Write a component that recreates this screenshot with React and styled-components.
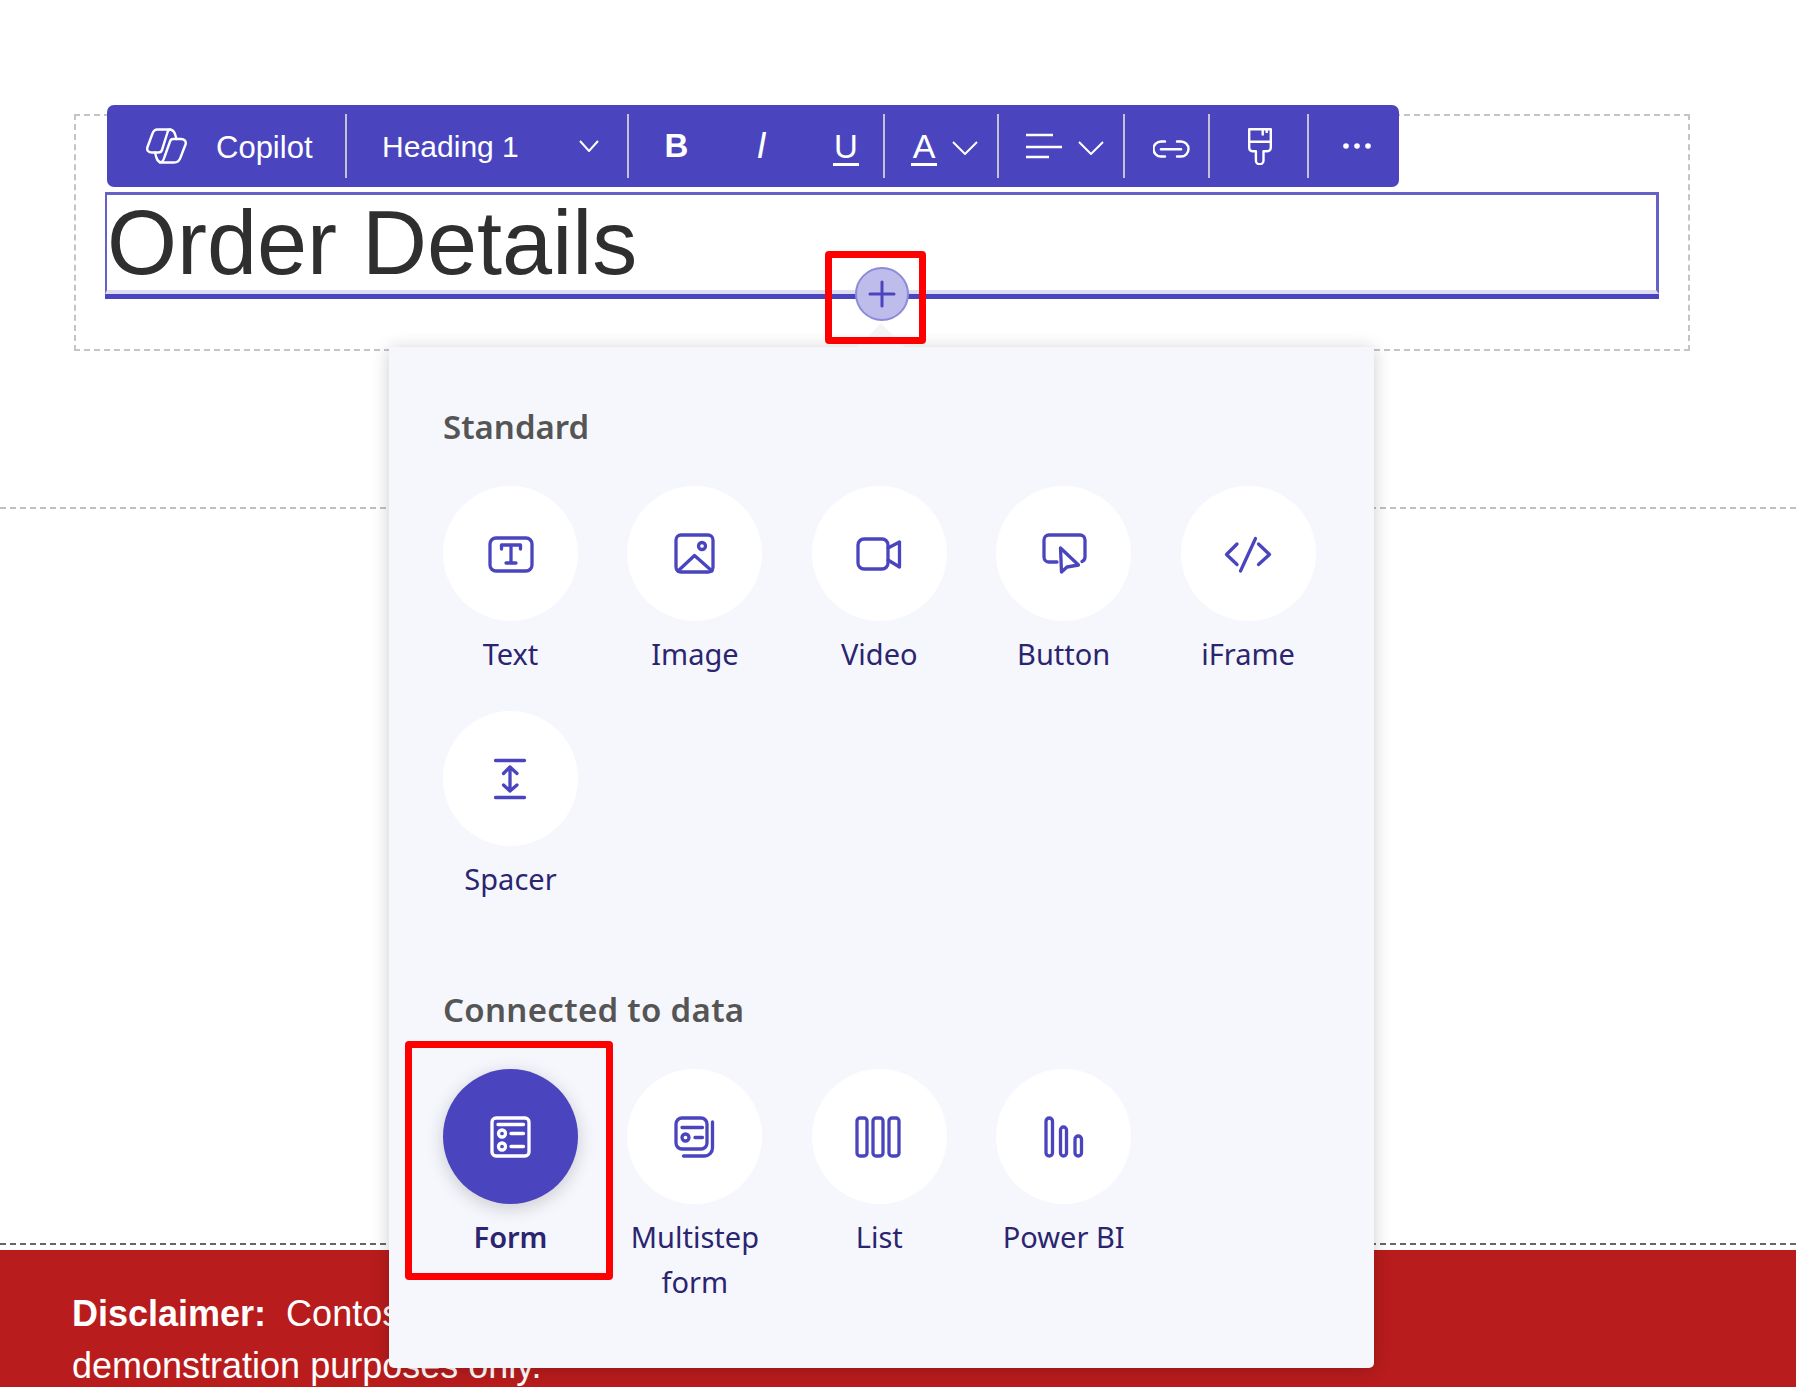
import styled, { createGlobalStyle } from "styled-components";

const PURPLE = "#4a45bf";

const GlobalStyle = createGlobalStyle`
  html, body {
    margin: 0;
    padding: 0;
    background: #fff;
    overflow: hidden;
  }
  * { box-sizing: border-box; }
`;

// ---------------- Page ----------------

const Page = styled.div`
  position: relative;
  display: flex;
  flex-direction: column;
  width: 1796px;
  height: 1387px;
  overflow: hidden;
  font-family: "Liberation Sans", Arial, sans-serif;
`;

const HeaderSection = styled.section`
  height: 509px;
  padding: 114px 106px 0 74px;
  border-bottom: 2px dashed #c0c0c0;
`;

const MiddleSection = styled.section`
  flex: 1;
  margin-bottom: 5px;
  border-bottom: 2px dashed #666;
`;

const DashedBox = styled.div`
  position: relative;
  height: 237px;
  padding: 76px 29px 0 29px;
  border: 2px dashed #c4c4c4;
`;

const TitleFrame = styled.div`
  border-bottom: 5px solid ${PURPLE};
`;

const TitleBox = styled.div`
  height: 102px;
  padding: 2px 0 0 0;
  border: 3px solid #6562c6;
  border-left-width: 2px;
  border-bottom: 4px solid #dcdcf2;
`;

const Title = styled.h1`
  margin: 0;
  font-size: 90px;
  line-height: 93px;
  font-weight: 400;
  color: #2f2f2f;
`;

// ---------------- Toolbar ----------------

const Toolbar = styled.div`
  position: absolute;
  top: -11px;
  left: 31px;
  display: flex;
  align-items: center;
  width: 1292px;
  height: 82px;
  background: ${PURPLE};
  border-radius: 7px;
  color: #fff;
`;

const Segment = styled.div`
  display: flex;
  align-items: center;
  flex: none;
  width: ${p => p.$w}px;
  height: 64px;
  padding-left: ${p => p.$pl || 0}px;
  border-left: ${p => (p.$first ? "none" : "2px solid #c3c3d6")};
`;

const ToolText = styled.span`
  padding-top: 2px;
  font-size: ${p => p.$size}px;
  line-height: 1;
  margin-left: ${p => p.$ml || 0}px;
`;

const Letter = styled.span`
  display: block;
  flex: none;
  width: ${p => p.$w}px;
  height: 40px;
  text-align: center;
  font-size: ${p => p.$size || 33}px;
  line-height: 40px;
  font-weight: ${p => (p.$bold ? 700 : 400)};
  font-style: ${p => (p.$italic ? "italic" : "normal")};
`;

const UnderLetter = styled.span`
  display: block;
  flex: none;
  width: ${p => p.$w}px;
  height: 36px;
  margin-top: 4px;
  margin-left: ${p => p.$ml || 0}px;
  font-size: ${p => p.$size}px;
  line-height: 33px;
  text-align: center;
  border-bottom: 3px solid #fff;
`;

const IconSlot = styled.span`
  display: flex;
  flex: none;
  margin-left: ${p => p.$ml || 0}px;
  margin-top: ${p => p.$mt || 0}px;
`;

const Chevron = ({ w, h }) => (
  <svg width={w} height={h} viewBox={`0 0 ${w} ${h}`} fill="none" stroke="#fff" strokeWidth="2">
    <polyline points={`1,1 ${w / 2},${h - 1} ${w - 1},1`} />
  </svg>
);

const CopilotIcon = () => (
  <svg width="41" height="37" viewBox="0 0 41 37" fill="none" stroke="#fff" strokeWidth="2.4" strokeLinejoin="round" strokeLinecap="round">
    <path d="M11.500 1.500H23C26 1.500 28 3 29 6L30.500 11H35C38.500 11 40.500 13.500 39.500 16.500L34.500 29.500C33.500 32.800 31 34.500 28 34.500H16.500C13.500 34.500 11.500 33 10.500 30L9 24.500H5.500C2 24.500 .5 22 1.500 19L6.500 5.500C7.500 2.800 9.200 1.500 11.500 1.500Z" />
    <path d="M9 24.500H12.500C14.500 24.500 15.500 23.500 16 22L21 6C21.700 3.500 22 1.500 24 1.500" />
    <path d="M30.500 11H27C25.500 11 24.500 12 24 13.500L18.500 29C17.500 32.500 16 34.500 14 34.500" />
  </svg>
);

const AlignIcon = () => (
  <svg width="37" height="26" viewBox="0 0 37 26" fill="none" stroke="#fff" strokeWidth="2.400">
    <path d="M0 2H27M0 14H36M0 24H23" />
  </svg>
);

const LinkIcon = () => (
  <svg width="37" height="18" viewBox="0 0 37 18" fill="none" stroke="#fff" strokeWidth="2.400" strokeLinecap="round">
    <path d="M12 1.500H8A7.500 7.500 0 0 0 8 16.500H12" />
    <path d="M24 1.500H28A7.500 7.500 0 0 1 28 16.500H24" />
    <path d="M8 9.200H28" />
  </svg>
);

const BrushIcon = () => (
  <svg width="24" height="37" viewBox="0 0 24 37" fill="none" stroke="#fff" strokeWidth="2.400" strokeLinejoin="round">
    <path d="M1.200 1.200H22.800V19.500C22.800 22 21 23.300 18 23.300H15.500V32.500A3.800 3.800 0 0 1 7.900 32.500V23.300H5.500C3 23.300 1.200 22 1.200 19.500Z" />
    <path d="M1.200 13.700H22.800M14.700 1.200V7.500M18.700 1.200V5" />
  </svg>
);

const DotsIcon = () => (
  <svg width="28" height="6" viewBox="0 0 28 6" fill="#fff">
    <circle cx="3" cy="3" r="2.800" />
    <circle cx="14" cy="3" r="2.800" />
    <circle cx="25" cy="3" r="2.800" />
  </svg>
);

// ---------------- Insert panel ----------------

const Panel = styled.div`
  position: absolute;
  left: 389px;
  top: 347px;
  width: 985px;
  height: 1021px;
  padding: 60px 58px 0 54px;
  background: #f6f7fc;
  border-radius: 0 0 5px 5px;
  box-shadow: 0 2px 18px rgba(0, 0, 0, 0.2);

  &::before {
    content: "";
    position: absolute;
    top: -17px;
    left: 475px;
    width: 34px;
    height: 34px;
    transform: rotate(45deg);
    clip-path: polygon(0 0, 100% 0, 0 100%);
    background: #f4f4f7;
  }
`;

const PanelInner = styled.div`
  position: relative;
`;

const SectionTitle = styled.h2`
  margin: ${p => p.$mt || 0}px 0 39px;
  font-family: "Noto Sans", sans-serif;
  font-size: 33px;
  line-height: 40px;
  font-weight: 600;
  letter-spacing: ${p => p.$spacing || 0}px;
  color: #555;
`;

const ItemGrid = styled.div`
  display: grid;
  grid-template-columns: repeat(5, 135px);
  column-gap: 49.400px;
  row-gap: 35px;
`;

const Item = styled.div`
  display: flex;
  flex-direction: column;
  align-items: center;
  min-height: 190px;
`;

const Circle = styled.div`
  display: flex;
  align-items: center;
  justify-content: center;
  width: 135px;
  height: 135px;
  border-radius: 50%;
  background: ${p => (p.$active ? PURPLE : "#fff")};
  color: ${p => (p.$active ? "#fff" : PURPLE)};
  box-shadow: ${p => (p.$active ? "0 4px 18px rgba(0, 0, 0, 0.18)" : "none")};
`;

const Label = styled.div`
  margin-top: 10px;
  font-family: "Noto Sans", sans-serif;
  font-size: 29px;
  line-height: 45px;
  text-align: center;
  font-weight: ${p => (p.$active ? 600 : 400)};
  color: #2b2570;
`;

const Glyph = ({ children }) => (
  <svg width="60" height="60" viewBox="0 0 60 60" fill="none" stroke="currentColor" strokeWidth="3.300" strokeLinecap="round" strokeLinejoin="round">
    {children}
  </svg>
);

const items = {
  standard: [
    {
      name: "Text",
      icon: (
        <>
          <rect x="9" y="14" width="42" height="33" rx="6" />
          <path d="M20.500 25V21H39.500V25M30 21V39M25 39H35" />
        </>
      ),
    },
    {
      name: "Image",
      icon: (
        <>
          <rect x="11" y="11" width="37" height="37" rx="5" />
          <circle cx="37" cy="22" r="3.500" />
          <path d="M13 47L29.500 31.500L47 47" />
        </>
      ),
    },
    {
      name: "Video",
      icon: (
        <>
          <rect x="9" y="15" width="30" height="30" rx="6" />
          <path d="M39 24L50.500 18V43L39 36" />
        </>
      ),
    },
    {
      name: "Button",
      icon: (
        <>
          <path d="M23 38H15A5 5 0 0 1 10 33V16A5 5 0 0 1 15 11H46A5 5 0 0 1 51 16V33A5 5 0 0 1 48 37.500" />
          <path d="M26.500 24L44.500 41L33 43L27.500 48Z" />
        </>
      ),
    },
    {
      name: "iFrame",
      icon: <path d="M19 20L8.500 30.500L19 40.500M37.500 14.500L22.500 47M40.500 20L51.500 30.500L40.500 40.500" />,
    },
    {
      name: "Spacer",
      icon: <path d="M14.500 11.500H43.500M14.500 48.500H43.500M29 18V42M22.500 24.500L29 18L36 24.500M22.500 36L29 42L36 36" />,
    },
  ],
  data: [
    {
      name: "Form",
      active: true,
      icon: (
        <>
          <rect x="11" y="11" width="37" height="38" rx="4" />
          <path d="M17 17.500H42.500M30 26.500H42.500M30 39.500H42.500" />
          <circle cx="21" cy="26.500" r="3.500" />
          <circle cx="21" cy="39.500" r="3.500" />
        </>
      ),
    },
    {
      name: "Multistep form",
      icon: (
        <>
          <rect x="11" y="11" width="31" height="31" rx="6" />
          <path d="M17 20.500H37.500M30 30.500H37.500" />
          <circle cx="20.500" cy="30.500" r="3.500" />
          <path d="M47.500 15V41A8 8 0 0 1 39.500 49H18.500" />
        </>
      ),
    },
    {
      name: "List",
      icon: (
        <>
          <rect x="8" y="11" width="10" height="38" rx="3" />
          <rect x="24" y="11" width="10" height="38" rx="3" />
          <rect x="40" y="11" width="10" height="38" rx="3" />
        </>
      ),
    },
    {
      name: "Power BI",
      icon: (
        <>
          <rect x="12" y="11" width="6.500" height="38" rx="3.250" />
          <rect x="26.500" y="20" width="6" height="29" rx="3" />
          <rect x="41" y="29" width="6.500" height="20" rx="3.250" />
        </>
      ),
    },
  ],
};

const InsertItem = ({ item }) => (
  <Item>
    <Circle $active={item.active}>
      <Glyph>{item.icon}</Glyph>
    </Circle>
    <Label $active={item.active}>{item.name}</Label>
  </Item>
);

// ---------------- Overlays ----------------

const RedMark = styled.div`
  position: absolute;
  left: ${p => p.$x}px;
  top: ${p => p.$y}px;
  width: ${p => p.$w}px;
  height: ${p => p.$h}px;
  border: 7px solid #ff0000;
  border-radius: 4px;
`;

const AddButton = styled.div`
  position: absolute;
  left: 855px;
  top: 267px;
  display: flex;
  align-items: center;
  justify-content: center;
  width: 54px;
  height: 54px;
  border-radius: 50%;
  background: #bdbcea;
  border: 2px solid #8d8ad8;
  color: ${PURPLE};
`;

// ---------------- Footer ----------------

const Disclaimer = styled.footer`
  flex: none;
  height: 137px;
  padding: 38px 0 0 72px;
  background: #b91c1c;
  color: #fff;
  font-size: 36px;
  line-height: 52px;
`;

const DisclaimerLine = styled.div`
  white-space: pre;
`;

export default function App() {
  return (
    <Page>
      <GlobalStyle />
      <HeaderSection>
        <DashedBox>
          <Toolbar>
            <Segment $first $w={238} $pl={39}>
              <CopilotIcon />
              <ToolText $size={31} $ml={29}>Copilot</ToolText>
            </Segment>
            <Segment $w={282} $pl={35}>
              <ToolText $size={30}>Heading 1</ToolText>
              <IconSlot $ml={60}>
                <Chevron w={20} h={12} />
              </IconSlot>
            </Segment>
            <Segment $w={256} $pl={5}>
              <Letter $w={85} $bold>B</Letter>
              <Letter $w={85} $size={36} $italic>I</Letter>
              <UnderLetter $w={26} $ml={29} $size={33}>U</UnderLetter>
            </Segment>
            <Segment $w={114} $pl={26}>
              <UnderLetter $w={26} $size={34}>A</UnderLetter>
              <IconSlot $ml={15} $mt={3}>
                <Chevron w={26} h={14} />
              </IconSlot>
            </Segment>
            <Segment $w={126} $pl={27}>
              <AlignIcon />
              <IconSlot $ml={15} $mt={3}>
                <Chevron w={26} h={14} />
              </IconSlot>
            </Segment>
            <Segment $w={85} $pl={28}>
              <IconSlot $mt={5}>
                <LinkIcon />
              </IconSlot>
            </Segment>
            <Segment $w={99} $pl={38}>
              <BrushIcon />
            </Segment>
            <Segment $w={92} $pl={34}>
              <DotsIcon />
            </Segment>
          </Toolbar>
          <TitleFrame>
            <TitleBox>
              <Title>Order Details</Title>
            </TitleBox>
          </TitleFrame>
        </DashedBox>
      </HeaderSection>
      <MiddleSection />
      <Disclaimer>
        <DisclaimerLine>
          <strong>Disclaimer:</strong>{"  Contoso is a fictional company used for"}
        </DisclaimerLine>
        <DisclaimerLine>demonstration purposes only.</DisclaimerLine>
      </Disclaimer>

      <Panel>
        <PanelInner>
          <SectionTitle>Standard</SectionTitle>
          <ItemGrid>
            {items.standard.map(item => (
              <InsertItem key={item.name} item={item} />
            ))}
          </ItemGrid>
          <SectionTitle $mt={89} $spacing={0.3}>Connected to data</SectionTitle>
          <ItemGrid>
            {items.data.map(item => (
              <InsertItem key={item.name} item={item} />
            ))}
          </ItemGrid>
        </PanelInner>
      </Panel>

      <AddButton>
        <svg width="28" height="28" viewBox="0 0 28 28" fill="none" stroke="currentColor" strokeWidth="3" strokeLinecap="round">
          <path d="M14 2V26M2 14H26" />
        </svg>
      </AddButton>
      <RedMark $x={825} $y={251} $w={101} $h={93} />
      <RedMark $x={405} $y={1041} $w={208} $h={239} />
    </Page>
  );
}
